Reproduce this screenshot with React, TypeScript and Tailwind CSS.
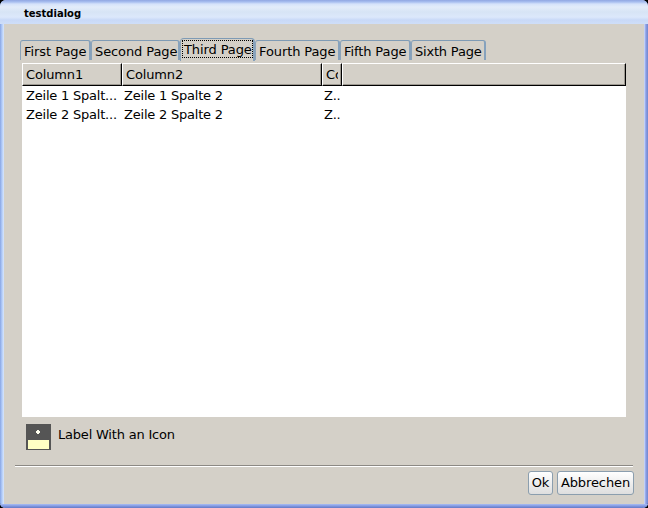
import React from 'react';

type TabProps = { label: string; width: string; spacing: string; active?: boolean };

function Tab({ label, width, spacing, active }: TabProps) {
  return (
    <div
      className={`${width} ${spacing} ${active ? 'h-[23px] rounded-t-[4px] pl-px pt-px' : 'h-[20px] mb-px rounded-t-[3px] pl-[3px] pt-[2px]'} shrink-0 border-t border-l border-r-2 border-t-[#7f9bb5] border-l-[#8ba3b9] border-r-[#86a2bd] bg-[#d4d0c8] whitespace-nowrap`}
    >
      {active ? (
        <div className="h-[18px] w-[71px] border border-dotted border-black pl-px leading-[18px]">{label}</div>
      ) : (
        <div className="leading-[18px]">{label}</div>
      )}
    </div>
  );
}

function HeaderCell({ label, width }: { label?: string; width: string }) {
  return (
    <div
      className={`${width} h-[23px] overflow-hidden whitespace-nowrap border-t border-l border-r border-b border-t-white border-l-white border-r-black border-b-black pl-[3px] leading-[21px] tracking-[-0.15px] shadow-[inset_-1px_-1px_0_#9d9991]`}
    >
      <div className="mr-[3px] overflow-hidden">{label}</div>
    </div>
  );
}

function Row({ cells }: { cells: string[] }) {
  return (
    <div className="flex h-[19px] leading-[19px] tracking-[-0.21px] whitespace-nowrap">
      <div className="w-[98px] pl-1">{cells[0]}</div>
      <div className="w-[200px] pl-1">{cells[1]}</div>
      <div className="w-[22px] pl-1">{cells[2]}</div>
    </div>
  );
}

function Button({ label, width }: { label: string; width: string }) {
  return (
    <button
      className={`${width} h-[24px] rounded-[3px] border border-[#8b9eae] bg-linear-to-b from-white to-[#dedede] p-0 text-center leading-[22px] tracking-[-0.1px] whitespace-nowrap`}
    >
      {label}
    </button>
  );
}

export default function App() {
  return (
    <div className="h-[508px] w-[648px] overflow-hidden bg-black font-['DejaVu_Sans',sans-serif] text-[13px] text-black">
      <div className="flex h-full flex-col overflow-hidden rounded-t-[6px] rounded-b-[5px] bg-[linear-gradient(to_right,#88a4e2_0,#9db9ef_1px,#b3ccf8_2px,#d9e7fc_4px,#d9e7fc_644px,#a9b9f2_645px,#8b9ee3_646px,#7086ce_648px)]">
        <div className="h-[24px] shrink-0 bg-[linear-gradient(to_bottom,#91a6e2_0,#a9bff0_2px,#d5e2fa_4px,#e3ecfa_7px,#d7e4f5_12px,#dce8fb_17px,#c9d9f7_20px,#cfdef8_24px)] pl-6 text-[10px] leading-[27px] font-bold">
          testdialog
        </div>
        <div className="mx-1 flex h-[480px] shrink-0 flex-col bg-[#d4d0c8]">
          <div className="mt-[14px] ml-4 flex h-[23px] items-end">
            <Tab label="First Page" width="w-[71px]" spacing="tracking-[-0.05px]" />
            <Tab label="Second Page" width="w-[89px]" spacing="tracking-[-0.1px]" />
            <Tab label="Third Page" width="w-[75px]" spacing="tracking-[-0.1px]" active />
            <Tab label="Fourth Page" width="w-[85px]" spacing="tracking-[-0.1px]" />
            <Tab label="Fifth Page" width="w-[71px]" spacing="tracking-[-0.1px]" />
            <Tab label="Sixth Page" width="w-[75px]" spacing="tracking-[-0.2px]" />
          </div>
          <div className="mt-[2px] ml-[18px] h-[354px] w-[604px] bg-white">
            <div className="flex bg-[#d4d0c8]">
              <HeaderCell label="Column1" width="w-[100px]" />
              <HeaderCell label="Column2" width="w-[200px]" />
              <HeaderCell label="Column3" width="w-[20px]" />
              <HeaderCell width="w-[284px]" />
            </div>
            <Row cells={['Zeile 1 Spalt...', 'Zeile 1 Spalte 2', 'Z..']} />
            <Row cells={['Zeile 2 Spalt...', 'Zeile 2 Spalte 2', 'Z..']} />
          </div>
          <div className="mt-[7px] ml-[22px] flex h-[26px] gap-[7px]">
            <svg width="25" height="26" shapeRendering="crispEdges">
              <rect width="25" height="26" fill="#555555" />
              <path d="M11 6h2v1h1v2h-1v1h-2V9h-1V7h1z" fill="#fffff0" />
              <rect x="2" y="16" width="21" height="9" fill="#ffffc4" />
            </svg>
            <span className="leading-[21px] tracking-[-0.2px]">Label With an Icon</span>
          </div>
          <div className="mt-[15px] ml-[11px] h-[2px] w-[618px] shrink-0 border-t border-b border-t-[#8c8984] border-b-white" />
          <div className="mt-[4px] mr-[10px] flex justify-end gap-1">
            <Button label="Ok" width="w-[25px]" />
            <Button label="Abbrechen" width="w-[77px]" />
          </div>
        </div>
        <div className="h-1 shrink-0 bg-[linear-gradient(to_bottom,#a9bdf3,#8299e2_50%,#6379c4)]" />
      </div>
    </div>
  );
}
